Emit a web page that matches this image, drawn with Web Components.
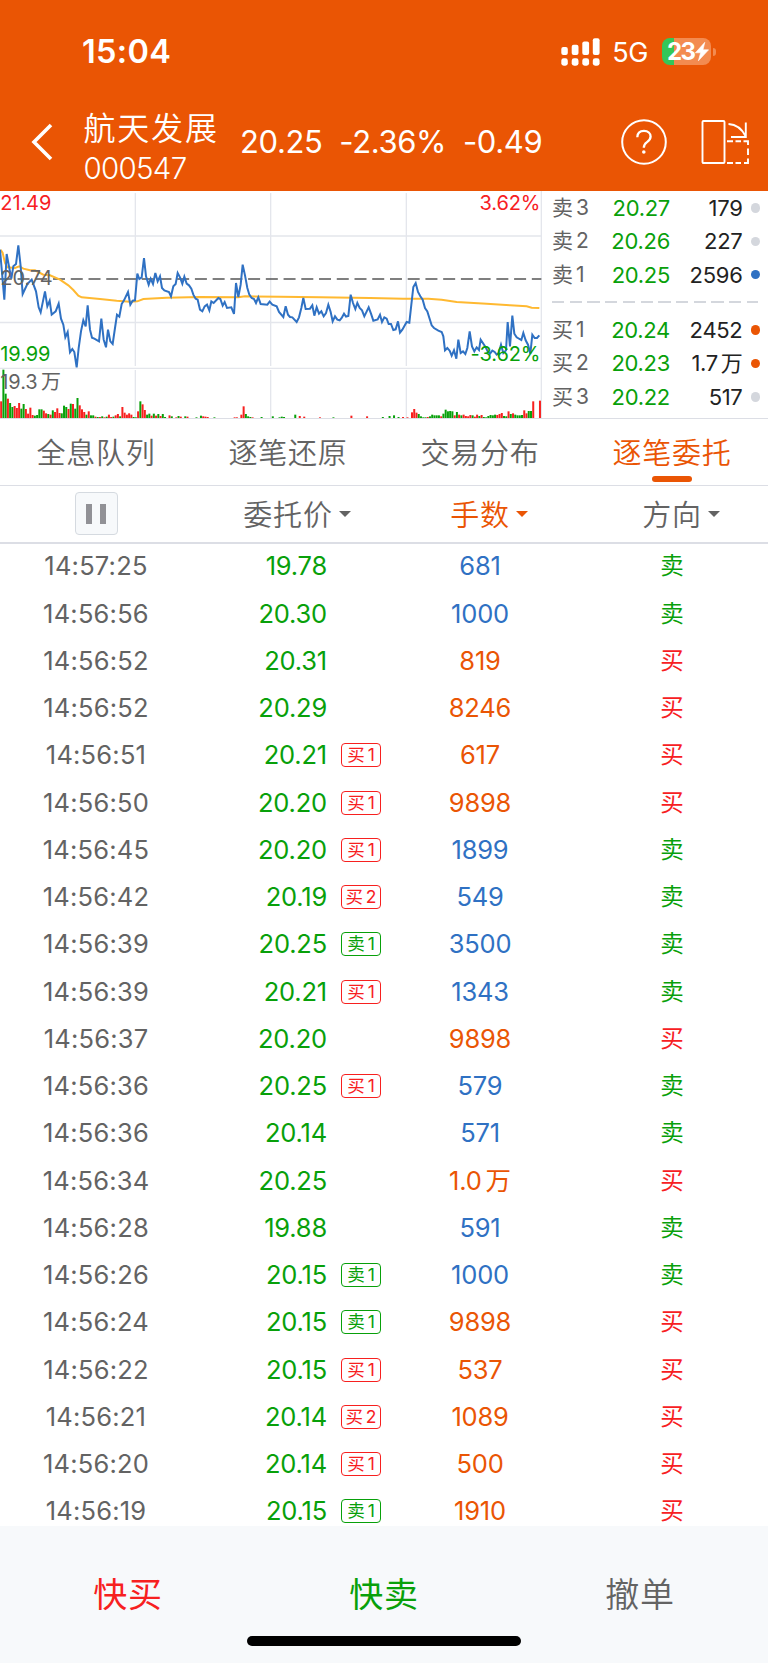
<!DOCTYPE html>
<html lang="zh-CN">
<head>
<meta charset="utf-8">
<title>航天发展 000547</title>
<style>
  body {
    margin: 0;
    width: 768px;
    height: 1663px;
    overflow: hidden;
    background: #fff;
    font-family: Inter, "Noto Sans CJK SC", sans-serif;
    --brand: #ea5504;
    --up: #f7201f;
    --down: #08a00a;
    --blue: #2f71c3;
    --grey: #636363;
    --line: #dcdee5;
  }
</style>
</head>
<body>
<stock-app></stock-app>

<script>
class StatusBar extends HTMLElement {
  constructor() {
    super();
    this.attachShadow({ mode: 'open' });
    this.shadowRoot.innerHTML = `
      <style>
        :host {
          display: flex;
          align-items: center;
          height: 103px;
          padding: 0 52px 0 82px;
          color: #fff;
        }
        #time { flex: 1; font-size: 32.5px; font-weight: 600; letter-spacing: 0.3px; }
        #net { margin: 1px 14px 0 12.5px; font-size: 27px; letter-spacing: -0.4px; }
        svg { display: block; }
        #battery {
          display: flex;
          align-items: center;
          box-sizing: border-box;
          width: 49px;
          height: 27px;
          padding-left: 5px;
          border-radius: 8px;
          background: linear-gradient(90deg, #34c759 11.5px, #f38b50 11.5px);
          font-size: 24px;
          font-weight: 700;
          letter-spacing: -1.6px;
        }
        #battery svg { margin-left: 0.5px; }
        #nub { width: 3px; height: 8px; margin-left: 2px; border-radius: 0 3px 3px 0; background: #f38b50; }
      </style>
      <span id="time">15:04</span>
      <svg width="39" height="28" viewBox="0 0 39 28" fill="#fff">
        <rect x="0.3" y="9" width="6.5" height="8" rx="2"/>
        <rect x="10.7" y="6.7" width="6.8" height="10.3" rx="2"/>
        <rect x="21.3" y="3.6" width="6.8" height="13.4" rx="2"/>
        <rect x="31.8" y="0.3" width="6.8" height="16.7" rx="2"/>
        <rect x="0.3" y="20.3" width="6.5" height="7.4" rx="2.4"/>
        <rect x="10.7" y="20.3" width="6.8" height="7.4" rx="2.4"/>
        <rect x="21.3" y="20.3" width="6.8" height="7.4" rx="2.4"/>
        <rect x="31.8" y="20.3" width="6.8" height="7.4" rx="2.4"/>
      </svg>
      <span id="net">5G</span>
      <div id="battery">23<svg width="14" height="19" viewBox="0 0 14 19"><path d="M9.8 0.3L0.4 10.8H5.6L3.4 18.8L13.6 7.8H8Z" fill="#fff" stroke="#fff" stroke-width="0.6"/></svg></div>
      <span id="nub"></span>
    `;
  }
}
customElements.define('status-bar', StatusBar);

class QuoteNav extends HTMLElement {
  constructor() {
    super();
    this.attachShadow({ mode: 'open' });
    this.shadowRoot.innerHTML = `
      <style>
        :host {
          display: flex;
          align-items: center;
          box-sizing: border-box;
          height: 87.5px;
          padding: 0 18px 10px 31px;
          color: #fff;
        }
        svg { display: block; flex: none; }
        #name { display: flex; flex-direction: column; width: 135px; margin: 14px 21.5px 0 30.5px; white-space: nowrap; }
        #name div { font-size: 32px; line-height: 38px; letter-spacing: 1.8px; font-weight: 350; }
        #name span { font-size: 29.5px; line-height: 40px; letter-spacing: -0.7px; font-weight: 360; }
        #figures { flex: 1; display: flex; gap: 17px; font-size: 31px; font-weight: 370; letter-spacing: -0.4px; }
        #help { margin-right: 34.5px; }
      </style>
      <svg width="22" height="40" viewBox="0 0 22 40"><path d="M20 3L3 20L20 37" fill="none" stroke="#fff" stroke-width="3.6"/></svg>
      <div id="name"><div><slot name="name"></slot></div><span><slot name="code"></slot></span></div>
      <div id="figures"><slot></slot></div>
      <svg id="help" width="46" height="46" viewBox="0 0 46 46" fill="none" stroke="#fff" stroke-width="2">
        <circle cx="23" cy="23" r="21.8"/>
        <path d="M16.3 18.3C16.4 14.3 19 11.9 23 11.9C27 11.9 29.6 14.4 29.6 17.6C29.6 20.2 28.2 21.6 26 23.1C23.6 24.7 22.8 25.8 22.8 28.8" stroke-width="2.3"/>
        <circle cx="22.8" cy="33" r="1.8" fill="#fff" stroke="none"/>
      </svg>
      <svg width="49" height="46" viewBox="0 0 49 46" fill="none" stroke="#fff" stroke-width="1.9">
        <rect x="1.5" y="2" width="22" height="42" rx="1"/>
        <path d="M27.5 5C35 5.5 41 10 44.5 17M44.8 3.5V18H30"/>
        <path d="M26 22.2H32M34.5 22.2H40M42.5 22.2H47V26M47 29.5V36M47 39.5V44H43M40 44H34.5M32 44H26"/>
      </svg>
    `;
  }
}
customElements.define('quote-nav', QuoteNav);

// chart units: 3 per pixel
const PRICE = `0,185 13,335 20,198 27,235 34,272 40,235 48,228 55,172 62,235 68,318 82,288 95,275 108,310 116,358 122,373
  135,310 142,355 149,338 155,380 167,370 176,347 183,392 190,410 196,448 203,432 210,493 217,483 223,492 230,538
  236,480 243,430 250,397 257,415 263,352 270,425 276,449 283,452 297,460 304,392 311,455 318,478 324,425 331,460
  338,468 345,420 351,380 358,386 365,348 372,337 384,312 391,350 398,338 405,337 412,257 418,273 425,268 432,210
  438,265 446,290 452,272 459,288 466,255 473,280 480,265 486,300 493,307 507,312 513,325 520,295 527,288 533,255
  540,268 547,287 553,266 560,287 567,292 574,302 580,320 587,332 593,335 600,365 607,370 614,355 621,350 628,367
  634,340 641,345 655,330 661,333 668,353 674,342 681,360 694,358 702,378 708,285 715,327 722,290 728,230 735,262
  742,300 748,320 755,330 762,333 768,345 775,328 782,348 802,350 809,341 817,350 830,355 837,372 850,387 857,355
  864,380 870,387 877,388 890,402 897,388 904,360 910,330 917,363 930,362 937,352 943,383 950,358 957,377 964,370
  971,385 978,375 985,350 992,372 998,400 1005,385 1012,395 1019,397 1025,390 1032,377 1038,386 1045,384 1052,320
  1059,345 1066,363 1072,345 1079,360 1086,367 1093,385 1106,358 1113,377 1120,398 1133,394 1140,380 1146,402
  1153,388 1160,392 1166,408 1173,408 1180,426 1187,424 1194,400 1200,434 1207,425 1220,402 1228,404 1234,350
  1240,297 1247,285 1254,312 1261,325 1268,335 1275,360 1282,370 1295,412 1302,420 1315,428 1325,432 1330,445
  1335,487 1342,480 1349,488 1355,503 1362,487 1369,512 1375,455 1382,495 1389,490 1396,498 1402,480 1409,430
  1416,475 1423,490 1430,478 1437,486 1442,455 1456,476 1463,490 1470,497 1477,488 1484,492 1490,500 1496,495
  1503,470 1510,495 1518,487 1523,402 1530,475 1537,383 1543,437 1550,448 1564,456 1570,435 1577,457 1584,470
  1591,497 1597,440 1604,450 1611,450 1618,442`;
const AVERAGE = `2,185 8,195 15,225 22,238 45,240 58,235 70,242 90,247 105,247 130,260 150,262 180,275 205,292 220,306
  235,323 245,328 300,333 350,338 390,341 412,340 430,333 500,329 600,327 715,328 735,325 840,326 960,328 1110,330
  1210,332 1285,332 1325,335 1370,342 1460,347 1530,352 1580,355 1595,359 1618,360`;

// one entry per minute, rising bars positive and falling bars negative
const VOLUME = [
  50, -145, -73, 58, -45, -33, 36, 30, 45, -28, -42, 27, 13, 31, 9, -7, -9, -26, -26, 22,
  14, -12, 10, -23, 18, 29, 15, -14, -37, -33, 27, -43, 42, -28, -60, 38, 26, 18, -10, 20,
  -8, -8, 4, -3, 3, -5, 2, -4, 10, 3, -4, 8, 12, -5, 33, 16, 10, 14, 10, -3,
  -2, 20, -50, 41, 24, -10, -13, 7, -13, 7, -12, 6, -12, -3, 0, 8, -5, 0, 2, -6,
  4, 0, -5, 4, 0, 0, 0, -2, 0, -7, 5, 4, 3, 0, 0, -2, 0, 0, 0, 0,
  0, 0, 0, 0, 2, 2, 0, 10, 35, -12, -5, -3, 2, 0, 0, 0, -3, 0, 0, 0,
  0, -5, 0, 0, -2, -4, -3, 0, 0, 0, 0, -10, 0, 6, 0, 4, 0, 0, 0, 0,
  0, 0, 2, 0, 0, 0, 0, 0, -2, 0, 0, 0, 0, 0, 0, 0, 7, 0, 0, 0,
  0, 0, 0, 5, 0, 0, 0, 0, 0, 0, -3, 0, 0, -6, 0, -8, 0, -3, 0, 3,
  0, 2, 0, 17, 27, 16, -12, -5, -2, -2, 3, -5, -10, -8, -8, -8, 5, -13, -25, -20,
  -21, -20, 8, -18, 10, -8, 10, 6, 5, 9, -8, 4, 10, -6, 9, -3, -2, -6, -9, -8,
  -10, 9, 12, 15, -6, -5, 20, -12, 14, -10, -8, -8, -9, 23, 14, -21, -21, 50, 0, 0, 52
];

class TrendChart extends HTMLElement {
  constructor() {
    super();
    this.attachShadow({ mode: 'open' });
    const bars = VOLUME.map((v, i) => v === 0 ? '' :
      `<rect x="${(0.5 + i * 6.735).toFixed(1)}" y="${690 - Math.abs(v)}" width="6" height="${Math.abs(v)}" fill="var(${v > 0 ? '--up' : '--down'})"/>`
    ).join('');
    this.shadowRoot.innerHTML = `
      <style>
        :host { display: block; width: 542px; height: 227px; }
        svg { display: block; }
        text { font-size: 60px; font-weight: 370; letter-spacing: -0.3px; word-spacing: -6px; }
      </style>
      <svg width="542" height="227" viewBox="0 9 1626 681">
        <g stroke="#e4e6ec" stroke-width="4">
          <path d="M406 15V534M812 15V534M1219 15V534M406 546V690M812 546V690M1219 546V690M1624 9V690"/>
          <path d="M0 144H1624M0 403.5H1624M0 541H1624"/>
        </g>
        <path d="M0 273H1624" stroke="#555" stroke-width="5" stroke-dasharray="36 17.2" stroke-dashoffset="0.5"/>
        ${bars}
        <polyline points="${AVERAGE}" fill="none" stroke="#ffb931" stroke-width="6"/>
        <polyline points="${PRICE}" fill="none" stroke="#2f71c3" stroke-width="6"/>
        <text x="1" y="66" fill="var(--up)">21.49</text>
        <text x="1" y="291" fill="var(--grey)">20.74</text>
        <text x="1" y="519" fill="var(--down)">19.99</text>
        <text x="1" y="603" fill="var(--grey)">19.3 万</text>
        <text x="1621" y="66" fill="var(--up)" text-anchor="end">3.62%</text>
        <text x="1621" y="519" fill="var(--down)" text-anchor="end">-3.62%</text>
      </svg>
    `;
  }
}
customElements.define('trend-chart', TrendChart);

class BookLevel extends HTMLElement {
  constructor() {
    super();
    this.attachShadow({ mode: 'open' });
    this.shadowRoot.innerHTML = `
      <style>
        :host { display: flex; align-items: center; height: 33.4px; font-size: 22px; font-weight: 370; line-height: 30px; white-space: nowrap; }
        #label { width: 50px; font-size: 21px; color: var(--grey); word-spacing: -3px; }
        #price { width: 68px; text-align: right; color: var(--down); letter-spacing: -0.3px; }
        #size { flex: 1; text-align: right; color: #222; letter-spacing: -0.3px; word-spacing: -3px; }
        #dot { width: 9.5px; height: 9.5px; margin-left: 8px; border-radius: 50%; background: ${this.getAttribute('dot') || '#d4d7dd'}; }
      </style>
      <span id="label">${this.getAttribute('label')}</span>
      <span id="price">${this.getAttribute('price')}</span>
      <span id="size"><slot></slot></span>
      <span id="dot"></span>
    `;
  }
}
customElements.define('book-level', BookLevel);

class OrderBook extends HTMLElement {
  constructor() {
    super();
    this.attachShadow({ mode: 'open' });
    this.shadowRoot.innerHTML = `
      <style>
        :host { display: block; flex: 1; padding: 0.7px 8px 0 10px; }
        hr { height: 2px; margin: 9.5px 2px 10.5px 0; border: 0; background: repeating-linear-gradient(90deg, #d4d7dd 0 12.3px, transparent 12.3px 17.7px); }
      </style>
      <book-level label="卖 3" price="20.27">179</book-level>
      <book-level label="卖 2" price="20.26">227</book-level>
      <book-level label="卖 1" price="20.25" dot="var(--blue)">2596</book-level>
      <hr>
      <book-level label="买 1" price="20.24" dot="var(--brand)">2452</book-level>
      <book-level label="买 2" price="20.23" dot="var(--brand)">1.7 万</book-level>
      <book-level label="买 3" price="20.22">517</book-level>
    `;
  }
}
customElements.define('order-book', OrderBook);

class TabItem extends HTMLElement {
  constructor() {
    super();
    this.attachShadow({ mode: 'open' });
    this.shadowRoot.innerHTML = `
      <style>
        :host {
          display: flex;
          flex-direction: column;
          align-items: center;
          flex: 1;
          color: var(--grey);
          font-size: 29px;
          font-weight: 350;
          line-height: 40px;
          letter-spacing: 0.8px;
          padding-top: 15px;
        }
        :host([active]) { color: var(--brand); }
        i { width: 39.5px; height: 6px; margin-top: 2.5px; border-radius: 3px; }
        :host([active]) i { background: var(--brand); }
      </style>
      <slot></slot><i></i>
    `;
  }
}
customElements.define('tab-item', TabItem);

class SortHead extends HTMLElement {
  constructor() {
    super();
    this.attachShadow({ mode: 'open' });
    this.shadowRoot.innerHTML = `
      <style>
        :host {
          display: flex;
          justify-content: center;
          align-items: center;
          padding: 0 1px 2px 0;
          color: var(--grey);
          font-size: 29px;
          font-weight: 350;
          letter-spacing: 0.8px;
        }
        :host([active]) { color: var(--brand); }
        i { margin: 3px -19px 0 6px; border: 6.5px solid transparent; border-top-color: currentColor; border-bottom: 0; }
      </style>
      <slot></slot><i></i>
    `;
  }
}
customElements.define('sort-head', SortHead);

class EntrustRow extends HTMLElement {
  constructor() {
    super();
    this.attachShadow({ mode: 'open' });
  }

  set data([time, price, tag, size, tone, side]) {
    const color = s => s === '买' ? 'var(--up)' : 'var(--down)';
    this.shadowRoot.innerHTML = `
      <style>
        :host {
          display: grid;
          grid-template-columns: repeat(4, 192px);
          align-items: center;
          box-sizing: border-box;
          height: 47.25px;
          padding-bottom: 1.4px;
          font-size: 25.5px;
          font-weight: 370;
          line-height: 28px;
          letter-spacing: -0.2px;
          word-spacing: -3px;
          text-align: center;
        }
        #time { color: var(--grey); letter-spacing: 0.2px; }
        #price { display: flex; align-items: center; color: var(--down); }
        #price span { width: 135px; text-align: right; }
        #price em {
          box-sizing: border-box;
          width: 40px;
          height: 24px;
          margin-left: 14px;
          border: 1.5px solid;
          border-radius: 4px;
          font-size: 17.5px;
          font-style: normal;
          line-height: 22px;
          letter-spacing: 0;
          word-spacing: -2px;
          white-space: nowrap;
          color: ${color(tag[0])};
        }
        #size { color: var(${tone === 'b' ? '--blue' : '--brand'}); }
        #side { font-size: 23.5px; font-weight: 400; line-height: 26px; color: ${color(side)}; }
      </style>
      <span id="time">${time}</span>
      <div id="price"><span>${price}</span>${tag ? `<em>${tag}</em>` : ''}</div>
      <span id="size">${size}</span>
      <span id="side">${side}</span>
    `;
  }
}
customElements.define('entrust-row', EntrustRow);

// time, price, level tag, lots, tone (b = blue, o = orange), side
const ROWS = [
  ['14:57:25', '19.78', '', '681', 'b', '卖'],
  ['14:56:56', '20.30', '', '1000', 'b', '卖'],
  ['14:56:52', '20.31', '', '819', 'o', '买'],
  ['14:56:52', '20.29', '', '8246', 'o', '买'],
  ['14:56:51', '20.21', '买 1', '617', 'o', '买'],
  ['14:56:50', '20.20', '买 1', '9898', 'o', '买'],
  ['14:56:45', '20.20', '买 1', '1899', 'b', '卖'],
  ['14:56:42', '20.19', '买 2', '549', 'b', '卖'],
  ['14:56:39', '20.25', '卖 1', '3500', 'b', '卖'],
  ['14:56:39', '20.21', '买 1', '1343', 'b', '卖'],
  ['14:56:37', '20.20', '', '9898', 'o', '买'],
  ['14:56:36', '20.25', '买 1', '579', 'b', '卖'],
  ['14:56:36', '20.14', '', '571', 'b', '卖'],
  ['14:56:34', '20.25', '', '1.0 万', 'o', '买'],
  ['14:56:28', '19.88', '', '591', 'b', '卖'],
  ['14:56:26', '20.15', '卖 1', '1000', 'b', '卖'],
  ['14:56:24', '20.15', '卖 1', '9898', 'o', '买'],
  ['14:56:22', '20.15', '买 1', '537', 'o', '买'],
  ['14:56:21', '20.14', '买 2', '1089', 'o', '买'],
  ['14:56:20', '20.14', '买 1', '500', 'o', '买'],
  ['14:56:19', '20.15', '卖 1', '1910', 'o', '买']
];

class EntrustList extends HTMLElement {
  constructor() {
    super();
    this.attachShadow({ mode: 'open' });
    this.shadowRoot.innerHTML = `
      <style>
        :host { display: block; overflow: hidden; }
        #head { display: grid; grid-template-columns: repeat(4, 192px); box-sizing: border-box; height: 58px; border-bottom: 2px solid var(--line); }
        #pause {
          display: flex;
          justify-content: center;
          align-items: center;
          align-self: center;
          justify-self: center;
          gap: 8.5px;
          box-sizing: border-box;
          width: 43px;
          height: 43px;
          border: 1.5px solid #d5dae0;
          border-radius: 4px;
          background: #f7f9fb;
        }
        #pause i { width: 6px; height: 20px; background: #919196; }
      </style>
      <div id="head">
        <span id="pause"><i></i><i></i></span>
        <sort-head>委托价</sort-head>
        <sort-head active>手数</sort-head>
        <sort-head>方向</sort-head>
      </div>
    `;
    for (const data of ROWS) {
      const row = document.createElement('entrust-row');
      row.data = data;
      this.shadowRoot.append(row);
    }
  }
}
customElements.define('entrust-list', EntrustList);

class TradeBar extends HTMLElement {
  constructor() {
    super();
    this.attachShadow({ mode: 'open' });
    this.shadowRoot.innerHTML = `
      <style>
        :host { display: flex; flex-direction: column; align-items: center; flex: none; height: 137.5px; background: #f7f9fb; }
        #actions { display: grid; grid-template-columns: repeat(3, 256px); height: 110.5px; line-height: 138px; text-align: center; font-size: 34px; letter-spacing: 0.8px; }
        #home { width: 274px; height: 10px; border-radius: 5px; background: #000; }
        .buy { color: var(--up); }
        .sell { color: var(--down); }
        .cancel { color: var(--grey); font-weight: 350; }
      </style>
      <div id="actions"><span class="buy">快买</span><span class="sell">快卖</span><span class="cancel">撤单</span></div>
      <div id="home"></div>
    `;
  }
}
customElements.define('trade-bar', TradeBar);

class StockApp extends HTMLElement {
  constructor() {
    super();
    this.attachShadow({ mode: 'open' });
    this.shadowRoot.innerHTML = `
      <style>
        :host { display: flex; flex-direction: column; height: 1663px; }
        header { flex: none; height: 190.5px; background: var(--brand); }
        #quote { flex: none; display: flex; box-sizing: border-box; height: 228px; border-bottom: 1.5px solid var(--line); }
        nav { flex: none; display: flex; box-sizing: border-box; height: 67px; border-bottom: 1.5px solid var(--line); }
        entrust-list { flex: 1; min-height: 0; }
      </style>
      <header>
        <status-bar></status-bar>
        <quote-nav>
          <span slot="name">航天发展</span>
          <span slot="code">000547</span>
          <span>20.25</span><span>-2.36%</span><span>-0.49</span>
        </quote-nav>
      </header>
      <div id="quote">
        <trend-chart></trend-chart>
        <order-book></order-book>
      </div>
      <nav>
        <tab-item>全息队列</tab-item>
        <tab-item>逐笔还原</tab-item>
        <tab-item>交易分布</tab-item>
        <tab-item active>逐笔委托</tab-item>
      </nav>
      <entrust-list></entrust-list>
      <trade-bar></trade-bar>
    `;
  }
}
customElements.define('stock-app', StockApp);
</script>
</body>
</html>
